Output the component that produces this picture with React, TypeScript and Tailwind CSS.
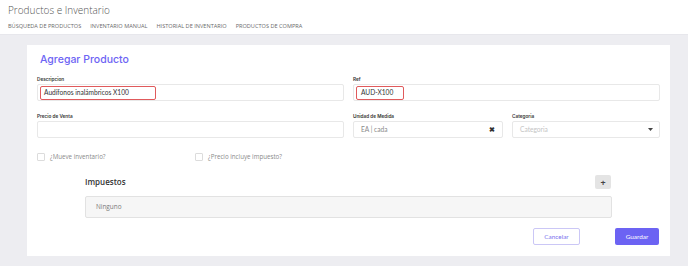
export default function App() {
  return (
    <div className="w-[688px] h-[266px] bg-[#ededf1] overflow-hidden font-['Open_Sans',sans-serif]">
      <div className="bg-white h-[35px] px-[8px] pt-[3px] border-b border-[#e7e7ec]">
        <div className="text-[10px] leading-[14px] font-light text-[#555]">Productos e Inventario</div>
        <div className="flex gap-[9px] mt-[5px] text-[5.6px] leading-[8px] text-[#6b6b6b] uppercase">
          <span>Búsqueda de productos</span>
          <span>Inventario manual</span>
          <span>Historial de inventario</span>
          <span>Productos de compra</span>
        </div>
      </div>

      <div className="ml-[27px] mt-[10px] w-[643px] h-[211px] bg-white px-[10px] pt-[8px]">
        <div className="pl-[3px] text-[10.5px] leading-[14px] font-medium text-[#6d64f4] font-['Inter',sans-serif]">
          Agregar Producto
        </div>

        <div className="grid grid-cols-2 gap-x-[9px] mt-[9px]">
          <Field label="Descripcion">
            <div className="h-[17px] border border-[#e8e8e8] rounded-[2px] flex items-center pl-[2px]">
              <div className="outline-[1.5px] outline-[#e05a5c] -outline-offset-1 rounded-[2px] h-[14px] w-[116px] flex items-center pl-[4px] text-[6.6px] text-[#333] font-['Lato',sans-serif]">
                Audífonos inalámbricos X100
              </div>
            </div>
          </Field>
          <Field label="Ref">
            <div className="h-[17px] border border-[#e8e8e8] rounded-[2px] flex items-center pl-[2px]">
              <div className="outline-[1.5px] outline-[#e05a5c] -outline-offset-1 rounded-[2px] h-[14px] w-[48px] flex items-center pl-[5px] text-[6.6px] text-[#333] font-['Lato',sans-serif]">
                AUD-X100
              </div>
            </div>
          </Field>
        </div>

        <div className="grid grid-cols-2 gap-x-[9px] mt-[12px]">
          <Field label="Precio de Venta">
            <div className="h-[17px] border border-[#e8e8e8] rounded-[2px]" />
          </Field>
          <div className="grid grid-cols-[150px_1fr] gap-x-[9px]">
            <Field label="Unidad de Medida">
              <div className="h-[17px] border border-[#e8e8e8] rounded-[2px] flex items-center justify-between pl-[7px] pr-[7px] text-[6.6px] text-[#8a8a8a] font-['Lato',sans-serif]">
                <span>EA | cada</span>
                <span className="text-[7px] font-bold text-[#333]">✖</span>
              </div>
            </Field>
            <Field label="Categoria">
              <div className="h-[17px] border border-[#e8e8e8] rounded-[2px] flex items-center justify-between pl-[7px] pr-[6px] text-[6.6px] text-[#c4c4c4] font-['Lato',sans-serif]">
                <span>Categoria</span>
                <svg width="5" height="3" viewBox="0 0 5 3"><path d="M0 0h5L2.5 3z" fill="#444" /></svg>
              </div>
            </Field>
          </div>
        </div>

        <div className="flex mt-[14px] text-[6.2px] leading-[9px] text-[#8a8a8a]">
          <label className="flex items-center gap-[5px] w-[158px]">
            <span className="w-[8px] h-[8px] border border-[#dcdcdc] rounded-[1px]" />
            ¿Mueve inventario?
          </label>
          <label className="flex items-center gap-[5px]">
            <span className="w-[8px] h-[8px] border border-[#dcdcdc] rounded-[1px]" />
            ¿Precio incluye impuesto?
          </label>
        </div>

        <div className="mx-[48px] mt-[14px]">
          <div className="flex items-center justify-between pr-[1px]">
            <span className="text-[8px] font-semibold text-[#333]">Impuestos</span>
            <span className="w-[16px] h-[14px] bg-[#e4e4e4] rounded-[2px] flex items-center justify-center text-[9px] leading-none font-bold text-[#444]">+</span>
          </div>
          <div className="mt-[7px] h-[22px] bg-[#f6f6f6] border border-[#e2e2e2] rounded-[2px] flex items-center pl-[10px] text-[6.4px] text-[#7a7a7a]">
            Ninguno
          </div>
        </div>

        <div className="flex justify-end mt-[10px] font-['Lato',sans-serif] text-[6.4px]">
          <button className="w-[47px] h-[17px] border border-[#cbc7f6] rounded-[2px] text-[#7b74ee] bg-white">Cancelar</button>
          <button className="w-[44px] h-[17px] ml-[35px] mr-[1px] rounded-[2px] bg-[#6c63f3] text-white">Guardar</button>
        </div>
      </div>
    </div>
  );
}

function Field({ label, children }: { label: string; children: React.ReactNode }) {
  return (
    <div>
      <div className="text-[4.7px] leading-[7px] font-semibold text-[#333] font-['Inter',sans-serif] mb-[1px]">{label}</div>
      {children}
    </div>
  );
}
